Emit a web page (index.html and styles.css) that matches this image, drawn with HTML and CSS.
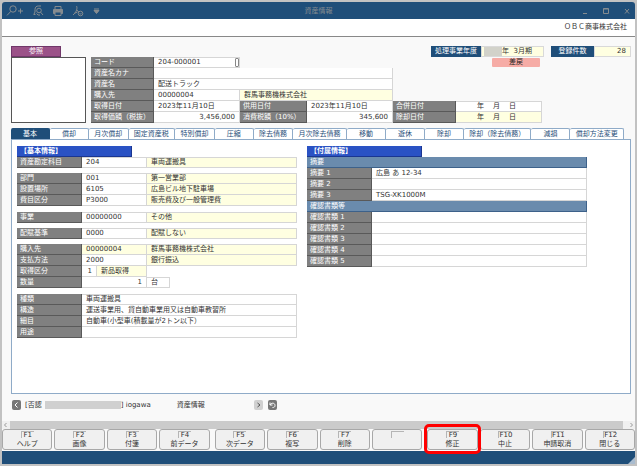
FILE: index.html
```
<!DOCTYPE html>
<html lang="ja">

<head>
  <meta charset="UTF-8">
  <meta name="viewport" content="width=device-width, initial-scale=1.0">
  <title>資産情報</title>
  <link rel="stylesheet" href="styles.css">
</head>

<body>
  <div class="window">
    <header class="titlebar">
      <div class="tools">
        <button type="button" class="tool" aria-label="拡大">
          <svg width="18" height="12" viewBox="0 0 18 12"><circle cx="7" cy="4" r="3.2" /><path d="M4.8 6.4L1 10.4M12 6h5M14.5 3.5v5" /></svg>
        </button>
        <button type="button" class="tool" aria-label="プレビュー">
          <svg width="12" height="12" viewBox="0 0 12 12"><path d="M3.5 9.5H1.8L3 7V4.5C3 2 4.5 1 6.5 1H9" /><circle cx="7" cy="5.5" r="2.3" /><path d="M8.6 7.2L11 10M4.5 8.5L6 10H8" /></svg>
        </button>
        <button type="button" class="tool" aria-label="印刷">
          <svg width="12" height="12" viewBox="0 0 12 12"><path d="M3 4V1.5h6V4" /><path class="solid" d="M1.500 4.500h9v4h-9z" /><path class="sheet" d="M3 7h6v3.500H3z" /></svg>
        </button>
        <button type="button" class="tool" aria-label="PDF">
          <svg width="12" height="12" viewBox="0 0 12 12"><path d="M4.5 1C5.5 3 5 6.5 1 10M5 5C5.5 6 6 6.5 7 7M2 8.5L5.5 7" /><circle cx="8.5" cy="8.5" r="2.3" /><path d="M7.5 8.5L8.3 9.3L9.6 7.8" /></svg>
        </button>
        <button type="button" class="tool" aria-label="メニュー">
          <svg width="8" height="12" viewBox="0 0 8 12"><path d="M2 4h5" /><path class="solid" d="M2 5.5h5L4.5 8.5z" /></svg>
        </button>
      </div>
      <h1>資産情報</h1>
      <div class="controls">
        <button type="button" class="tool" aria-label="最小化"><svg width="8" height="8" viewBox="0 0 8 8"><path d="M2 6.5h4" /></svg></button>
        <button type="button" class="tool" aria-label="最大化"><svg width="8" height="8" viewBox="0 0 8 8"><path d="M1.5 1.5h5v5h-5zM1.5 2h5" /></svg></button>
        <button type="button" class="tool" aria-label="閉じる"><svg width="8" height="8" viewBox="0 0 8 8"><path d="M2 2l4 4.5M6 2L2 6.5" /></svg></button>
      </div>
    </header>

    <div class="company">ＯＢＣ商事株式会社</div>

    <main>
      <section class="summary">
        <div class="photo">
          <button type="button" class="browse">参照</button>
          <div class="frame"></div>
        </div>
        <table class="grid head">
          <colgroup>
            <col class="w63"><col class="w86"><col class="w67"><col class="w86"><col class="w63"><col class="w86">
          </colgroup>
          <tr>
            <th><label for="code">コード</label></th>
            <td><div class="field"><input type="text" id="code" value="204-000001"><button type="button" class="pick" aria-label="検索"></button></div></td>
          </tr>
          <tr><th>資産名カナ</th><td colspan="3"></td></tr>
          <tr><th>資産名</th><td colspan="3">配送トラック</td></tr>
          <tr><th>購入先</th><td>00000004</td><td colspan="2" class="ref">群馬事務機株式会社</td></tr>
          <tr>
            <th>取得日付</th><td>2023年11月10日</td>
            <th>供用日付</th><td>2023年11月10日</td>
            <th>合併日付</th><td class="date top"><span>年</span><span>月</span><span>日</span></td>
          </tr>
          <tr>
            <th>取得価額（税抜）</th><td class="num">3,456,000</td>
            <th>消費税額（10%）</th><td class="num">345,600</td>
            <th>除却日付</th><td class="date ref"><span>年</span><span>月</span><span>日</span></td>
          </tr>
        </table>
        <div class="status">
          <dl>
            <div class="term"><dt>処理事業年度</dt><dd class="year"><span class="mask"></span>年&nbsp; 3月期</dd></div>
            <div class="count"><dt>登録件数</dt><dd>28</dd></div>
          </dl>
          <div class="returned">差戻</div>
        </div>
      </section>

      <nav class="tabs">
        <button type="button" class="active">基本</button>
        <button type="button">償却</button>
        <button type="button">月次償却</button>
        <button type="button">固定資産税</button>
        <button type="button">特別償却</button>
        <button type="button">圧縮</button>
        <button type="button">除去債務</button>
        <button type="button">月次除去債務</button>
        <button type="button">移動</button>
        <button type="button">遊休</button>
        <button type="button">除却</button>
        <button type="button">除却（除去債務）</button>
        <button type="button">減損</button>
        <button type="button">償却方法変更</button>
      </nav>

      <section class="panel">
        <div class="basic">
          <h2>【基本情報】</h2>
          <table class="grid">
            <colgroup><col class="w65"><col class="w65"><col></colgroup>
            <tr><th>資産勘定科目</th><td>204</td><td class="ref">車両運搬具</td></tr>
          </table>
          <table class="grid">
            <colgroup><col class="w65"><col class="w65"><col></colgroup>
            <tr><th>部門</th><td>001</td><td class="ref">第一営業部</td></tr>
            <tr><th>設置場所</th><td>6105</td><td class="ref">広島ビル地下駐車場</td></tr>
            <tr><th>費目区分</th><td>P3000</td><td class="ref">販売費及び一般管理費</td></tr>
          </table>
          <table class="grid">
            <colgroup><col class="w65"><col class="w65"><col></colgroup>
            <tr><th>事業</th><td>00000000</td><td class="ref">その他</td></tr>
          </table>
          <table class="grid">
            <colgroup><col class="w65"><col class="w65"><col></colgroup>
            <tr><th>配賦基準</th><td>0000</td><td class="ref">配賦しない</td></tr>
          </table>
          <table class="grid">
            <colgroup><col class="w65"><col class="w15"><col class="w50"><col class="w23"><col></colgroup>
            <tr><th>購入先</th><td colspan="2" class="ref">00000004</td><td colspan="2" class="ref">群馬事務機株式会社</td></tr>
            <tr><th>支払方法</th><td colspan="2">2000</td><td colspan="2" class="ref">銀行振込</td></tr>
            <tr><th>取得区分</th><td class="num">1</td><td class="ref">新品取得</td></tr>
            <tr><th>数量</th><td colspan="2" class="num">1</td><td class="top">台</td></tr>
          </table>
          <table class="grid">
            <colgroup><col class="w65"><col></colgroup>
            <tr><th>種類</th><td>車両運搬具</td></tr>
            <tr><th>構造</th><td>運送事業用、貸自動車業用又は自動車教習所</td></tr>
            <tr><th>細目</th><td>自動車(小型車(積載量が2トン以下）</td></tr>
            <tr><th>用途</th><td></td></tr>
          </table>
        </div>

        <div class="attached">
          <h2>【付属情報】</h2>
          <table class="grid">
            <colgroup><col class="w65"><col></colgroup>
            <tr><th colspan="2" class="band">摘要</th></tr>
            <tr><th>摘要 1</th><td>広島 あ 12-34</td></tr>
            <tr><th>摘要 2</th><td></td></tr>
            <tr><th>摘要 3</th><td>TSG-XK1000M</td></tr>
            <tr><th colspan="2" class="band">確認書類等</th></tr>
            <tr><th>確認書類 1</th><td></td></tr>
            <tr><th>確認書類 2</th><td></td></tr>
            <tr><th>確認書類 3</th><td></td></tr>
            <tr><th>確認書類 4</th><td></td></tr>
            <tr><th>確認書類 5</th><td></td></tr>
          </table>
        </div>
      </section>

      <div class="trail">
        <button type="button" class="step dark" aria-label="前へ"><svg width="9" height="10" viewBox="0 0 9 10"><path d="M5.5 2.5L3 5l2.5 2.5" /></svg></button>
        <p class="user">[否認<span class="mask"></span>] iogawa</p>
        <p class="screen">資産情報</p>
        <button type="button" class="step" aria-label="次へ"><svg width="9" height="10" viewBox="0 0 9 10"><path d="M3.5 3L6 5L3.5 7" /></svg></button>
        <button type="button" class="step dark" aria-label="履歴"><svg width="9" height="10" viewBox="0 0 9 10"><path d="M2 2.5V5h2.5M2 5C3 2.5 7 2.5 7 5.5C7 7 6 7.5 4.5 7.5" /></svg></button>
      </div>
    </main>

    <div class="scrollbar">
      <svg width="8" height="8" viewBox="0 0 8 8"><path d="M4.5 2L2.5 4l2 2" /></svg>
      <svg width="12" height="8" viewBox="0 0 12 8"><path d="M7.5 2l2 2l-2 2" /></svg>
    </div>

    <footer class="keys">
      <div class="group">
        <button type="button"><kbd>F1</kbd><span>ヘルプ</span></button>
        <button type="button"><kbd>F2</kbd><span>画像</span></button>
        <button type="button"><kbd>F3</kbd><span>付箋</span></button>
        <button type="button"><kbd>F4</kbd><span>前データ</span></button>
      </div>
      <div class="group">
        <button type="button"><kbd>F5</kbd><span>次データ</span></button>
        <button type="button"><kbd>F6</kbd><span>複写</span></button>
        <button type="button"><kbd>F7</kbd><span>削除</span></button>
        <button type="button" aria-label="F8"><kbd></kbd><span></span></button>
      </div>
      <div class="group">
        <button type="button" class="marked"><kbd>F9</kbd><span>修正</span></button>
        <button type="button"><kbd>F10</kbd><span>中止</span></button>
        <button type="button"><kbd>F11</kbd><span>申請取消</span></button>
        <button type="button"><kbd>F12</kbd><span>閉じる</span></button>
      </div>
    </footer>
    <div class="bottombar"><svg width="7" height="7" viewBox="0 0 7 7"><path d="M7 0v7H0z" /></svg></div>
  </div>
</body>

</html>
```
FILE: styles.css
```
* {
  margin: 0;
  padding: 0;
  box-sizing: border-box;
}

body {
  background: #c2c2c2;
  color: #333;
  font-family: "DejaVu Sans", "Noto Sans CJK JP", sans-serif;
  font-size: 7px;
  line-height: 10px;
}

button,
input,
kbd {
  font: inherit;
  color: inherit;
}

button {
  border: none;
  background: none;
}

svg {
  display: block;
  fill: none;
}

.window {
  display: flex;
  flex-direction: column;
  min-height: 100vh;
  padding: 2px;
}

/* title bar */
.titlebar {
  display: grid;
  grid-template-columns: 1fr auto 1fr;
  align-items: center;
  height: 17px;
  padding: 0 4px;
  background: #1f4e79;
  border-radius: 3px 3px 0 0;
  color: #858b90;
}

.titlebar h1 {
  font-size: 7px;
  font-weight: normal;
}

.tools,
.controls {
  display: flex;
  gap: 8px;
}

.controls {
  justify-content: flex-end;
  gap: 13px;
}

.tool svg {
  stroke: #858b90;
}

.tool .solid {
  fill: #858b90;
}

.tool .sheet {
  fill: #1f4e79;
}

.company {
  height: 18px;
  padding-right: 8px;
  background: #fff;
  border-bottom: 1px solid #888;
  line-height: 16px;
  text-align: right;
}

main {
  flex: 1;
  display: flex;
  flex-direction: column;
  padding: 9px 4px 0 9px;
  background: #f9f9f9;
}

/* top part */
.summary {
  display: grid;
  grid-template-columns: 75px 1fr;
  column-gap: 5px;
  position: relative;
}

.browse {
  display: block;
  width: 50px;
  height: 11px;
  background: #9b5288;
  border: 1px solid #70376a;
  color: #fff;
  line-height: 9px;
}

.frame {
  height: 66px;
  background: #fff;
  border: 1px solid #555;
}

.grid.head {
  width: 451px;
  margin-top: 11px;
}

.status {
  position: absolute;
  top: 0;
  right: 0;
}

.status dl {
  display: flex;
  gap: 7px;
}

.status dl div {
  display: flex;
  height: 11px;
}

.status dt {
  width: 50px;
  background: #1f4e79;
  color: #fff;
  text-align: center;
  line-height: 11px;
}

.status dd {
  flex: 1;
  padding: 0 4px;
  background: #ffffe1;
  border: 1px solid #d9d9d9;
  line-height: 9px;
  text-align: right;
}

.status dd.year {
  padding: 0 2px;
  text-align: left;
}

.term {
  width: 113px;
}

.count {
  width: 80px;
}

.status .count dt {
  width: 43px;
}

.mask {
  display: inline-block;
  width: 18px;
  height: 9px;
  background: #d2d2ca;
  vertical-align: top;
}

.returned {
  width: 48px;
  height: 9px;
  margin: 1px 0 0 61px;
  background: #f6aca6;
  border-radius: 1px;
  color: #222;
  line-height: 9px;
  text-align: center;
}

/* data grids */
.grid {
  table-layout: fixed;
  border-collapse: separate;
  border-spacing: 0;
  width: 100%;
}

.grid tr {
  height: 11px;
}

.grid th {
  padding: 0 3px;
  background: #808080;
  border: solid #595959;
  border-width: 0 1px 1px 0;
  color: #fff;
  font-weight: normal;
  text-align: left;
  white-space: nowrap;
}

.grid td {
  padding: 0 4px;
  background: #fff;
  border: solid #d6d6d6;
  border-width: 0 1px 1px 0;
  white-space: nowrap;
}

.grid tr:first-child td,
.grid td.top {
  border-top: 1px solid #d6d6d6;
  line-height: 9px;
}

.grid td.ref {
  background: #ffffe1;
}

.grid td.num {
  text-align: right;
}

.grid th.band {
  background: #6a8bad;
  border-color: #3d618a;
}

.date span {
  margin-left: 9px;
}

.date span:first-child {
  margin-left: 17px;
}

.field {
  display: flex;
  margin-right: -4px;
}

.field input {
  flex: 1;
  min-width: 0;
  height: 9px;
  border: none;
  outline: none;
  background: none;
}

.pick {
  width: 4px;
  height: 9px;
  background: #fff;
  border: 1px solid #888;
  border-radius: 1px;
}

.w15 { width: 15px; }
.w23 { width: 23px; }
.w50 { width: 50px; }
.w63 { width: 63px; }
.w65 { width: 65px; }
.w67 { width: 67px; }
.w86 { width: 86px; }

/* tabs */
.tabs {
  display: flex;
  margin: 5px 7px 0 0;
}

.tabs button {
  flex: 1 1 auto;
  min-width: 39px;
  height: 11px;
  padding: 0 4px;
  background: #fff;
  border: 1px solid #8fabc8;
  border-width: 1px 1px 0 0;
  border-radius: 2px 2px 0 0;
  color: #1f4e79;
  white-space: nowrap;
}

.tabs .active {
  background: #1f4e79;
  border-color: #1f4e79;
  color: #fff;
}

.panel {
  flex: 1;
  display: grid;
  grid-template-columns: 280px 280px;
  column-gap: 10px;
  align-content: start;
  padding: 6px 5px;
  background: #fff;
  border: 1px solid #8fabc8;
}

.panel h2 {
  width: 115px;
  height: 11px;
  padding-left: 3px;
  background: #2a52c4;
  border: solid #1b3690;
  border-width: 0 1px 1px 0;
  color: #fff;
  font-size: 7px;
}

.basic .grid + .grid {
  margin-top: 5px;
}

.basic .grid:nth-of-type(3n) {
  margin-top: 6px;
}

/* line under the panel */
.trail {
  display: flex;
  align-items: center;
  height: 27px;
  padding: 0 1px 5px;
}

.trail .mask {
  width: 76px;
  height: 8px;
  margin: 1px 0 0 3px;
  background: #d0d0d0;
}

.user {
  margin-left: 4px;
}

.screen {
  width: 77px;
  margin-left: 26px;
}

.step {
  background: #d0d0d0;
  border-radius: 2px;
}

.step + .step {
  margin-left: 5px;
}

.step svg {
  stroke: #555;
}

.step.dark {
  background: #777;
}

.step.dark svg {
  stroke: #fff;
}

.scrollbar {
  display: flex;
  justify-content: space-between;
  height: 8px;
  background: #cbcbcb;
}

.scrollbar svg {
  background: #f0f0f0;
  stroke: #999;
}

/* function keys */
.keys {
  display: flex;
  gap: 5px;
  padding-bottom: 1px;
  background: #f9f9f9;
}

.group {
  flex: 1;
  display: grid;
  grid-template-columns: repeat(4, 1fr);
  gap: 2px;
}

.keys button {
  position: relative;
  display: flex;
  flex-direction: column;
  align-items: center;
  height: 21px;
  padding-top: 1px;
  background: #f0f0f0;
  border: 1px solid #a8a8a8;
  border-radius: 3px;
}

.keys kbd {
  width: 13px;
  height: 7px;
  border: solid #b5b5b5;
  border-width: 1px 0 0 1px;
  line-height: 7px;
}

.keys span {
  margin-top: 1px;
}

/* red frame round the key to press */
.keys .marked::after {
  content: "";
  position: absolute;
  inset: -6px -4px -5px;
  border: 3px solid #f00;
  border-radius: 5px;
  z-index: 1;
}

.bottombar {
  display: flex;
  justify-content: flex-end;
  align-items: flex-end;
  height: 13px;
  background: #1f4e79;
}

.bottombar svg {
  fill: #a9bccf;
}
```
